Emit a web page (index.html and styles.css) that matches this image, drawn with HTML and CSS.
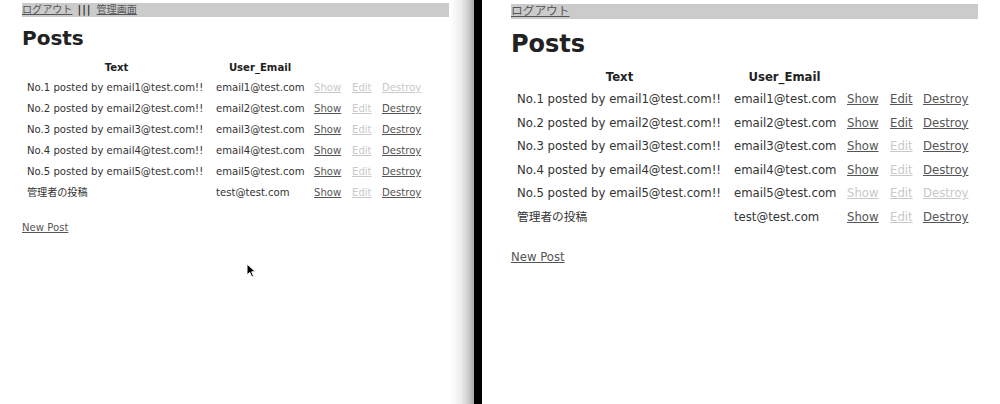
FILE: index.html
```html
<!DOCTYPE html>
<html lang="ja">
<head>
<meta charset="utf-8">
<title>Posts</title>
<link rel="stylesheet" href="styles.css">
</head>
<body>
<div class="screen">
  <section class="panel panel-left">
    <div class="nav"><a href="#">ログアウト</a><span class="sep">|||</span><a href="#">管理画面</a></div>
    <h1>Posts</h1>
    <table class="posts">
      <colgroup><col class="c1"><col class="c2"><col class="c3"><col class="c4"><col class="c5"></colgroup>
      <thead><tr><th>Text</th><th>User_Email</th><th></th><th></th><th></th></tr></thead>
      <tbody>
        <tr><td>No.1 posted by email1@test.com!!</td><td>email1@test.com</td><td><a class="off" href="#">Show</a></td><td><a class="off" href="#">Edit</a></td><td><a class="off" href="#">Destroy</a></td></tr>
        <tr><td>No.2 posted by email2@test.com!!</td><td>email2@test.com</td><td><a href="#">Show</a></td><td><a class="off" href="#">Edit</a></td><td><a href="#">Destroy</a></td></tr>
        <tr><td>No.3 posted by email3@test.com!!</td><td>email3@test.com</td><td><a href="#">Show</a></td><td><a class="off" href="#">Edit</a></td><td><a href="#">Destroy</a></td></tr>
        <tr><td>No.4 posted by email4@test.com!!</td><td>email4@test.com</td><td><a href="#">Show</a></td><td><a class="off" href="#">Edit</a></td><td><a href="#">Destroy</a></td></tr>
        <tr><td>No.5 posted by email5@test.com!!</td><td>email5@test.com</td><td><a href="#">Show</a></td><td><a class="off" href="#">Edit</a></td><td><a href="#">Destroy</a></td></tr>
        <tr><td>管理者の投稿</td><td>test@test.com</td><td><a href="#">Show</a></td><td><a class="off" href="#">Edit</a></td><td><a href="#">Destroy</a></td></tr>
      </tbody>
    </table>
    <p class="new"><a href="#">New Post</a></p>
    <svg class="cursor" width="12" height="16" viewBox="0 0 12 16"><path d="M1 1 L1 12 L3.8 9.4 L5.8 14 L7.6 13.2 L5.7 8.8 L9.5 8.8 Z" fill="#000" stroke="#fff" stroke-width="1"/></svg>
  </section>
  <div class="divider"></div>
  <section class="panel panel-right">
    <div class="nav"><a href="#">ログアウト</a></div>
    <h1>Posts</h1>
    <table class="posts">
      <colgroup><col class="c1"><col class="c2"><col class="c3"><col class="c4"><col class="c5"></colgroup>
      <thead><tr><th>Text</th><th>User_Email</th><th></th><th></th><th></th></tr></thead>
      <tbody>
        <tr><td>No.1 posted by email1@test.com!!</td><td>email1@test.com</td><td><a href="#">Show</a></td><td><a href="#">Edit</a></td><td><a href="#">Destroy</a></td></tr>
        <tr><td>No.2 posted by email2@test.com!!</td><td>email2@test.com</td><td><a href="#">Show</a></td><td><a href="#">Edit</a></td><td><a href="#">Destroy</a></td></tr>
        <tr><td>No.3 posted by email3@test.com!!</td><td>email3@test.com</td><td><a href="#">Show</a></td><td><a class="off" href="#">Edit</a></td><td><a href="#">Destroy</a></td></tr>
        <tr><td>No.4 posted by email4@test.com!!</td><td>email4@test.com</td><td><a href="#">Show</a></td><td><a class="off" href="#">Edit</a></td><td><a href="#">Destroy</a></td></tr>
        <tr><td>No.5 posted by email5@test.com!!</td><td>email5@test.com</td><td><a class="off" href="#">Show</a></td><td><a class="off" href="#">Edit</a></td><td><a class="off" href="#">Destroy</a></td></tr>
        <tr><td>管理者の投稿</td><td>test@test.com</td><td><a href="#">Show</a></td><td><a class="off" href="#">Edit</a></td><td><a href="#">Destroy</a></td></tr>
      </tbody>
    </table>
    <p class="new"><a href="#">New Post</a></p>
  </section>
</div>
</body>
</html>
```
FILE: styles.css
```css
html, body {
  margin: 0;
  padding: 0;
  background: #fff;
}
body {
  font-family: "DejaVu Sans", Verdana, "Noto Sans CJK JP", sans-serif;
  color: #333;
}
.screen {
  display: flex;
  width: 1000px;
  height: 404px;
  overflow: hidden;
}
.panel {
  box-sizing: border-box;
  height: 404px;
}
.panel a {
  color: #555;
  text-decoration: underline;
}
.panel a.off {
  color: #c9c9c9;
}
.nav {
  background: #cbcbcb;
}
.panel h1 {
  margin: 0;
  color: #222;
  font-weight: bold;
}
.posts {
  border-collapse: collapse;
  table-layout: fixed;
}
.posts th {
  font-weight: bold;
  text-align: center;
  color: #222;
}
.posts td {
  text-align: left;
  white-space: nowrap;
}
.new {
  margin: 0;
}

/* Left window (smaller) */
.panel-left {
  position: relative;
  width: 474px;
  padding: 3px 25px 0 22px;
  font-size: 10.1px;
  background: linear-gradient(to right, #fff 0, #fff 450px, #f0f0f0 460px, #cfcfcf 468px, #a8a8a8 474px);
}
.panel-left .nav {
  height: 14px;
  line-height: 14px;
}
.panel-left .sep {
  display: inline-block;
  margin: 0 5px 0 5px;
  letter-spacing: 1px;
  color: #333;
  font-weight: bold;
}
.panel-left h1 {
  font-size: 20px;
  line-height: 24px;
  margin-top: 9px;
}
.panel-left .posts {
  margin-top: 8px;
  width: 405px;
}
.panel-left .posts col.c1 { width: 189px; }
.panel-left .posts col.c2 { width: 98px; }
.panel-left .posts col.c3 { width: 38px; }
.panel-left .posts col.c4 { width: 30px; }
.panel-left .posts col.c5 { width: 50px; }
.panel-left .posts th,
.panel-left .posts td {
  padding: 0 5px;
}
.panel-left .posts th { height: 19px; line-height: 19px; }
.panel-left .posts td { height: 21px; line-height: 21px; }
.panel-left .new {
  margin-top: 18px;
  line-height: 13px;
}
.cursor {
  position: absolute;
  left: 246px;
  top: 263px;
}

.divider {
  width: 8px;
  flex: none;
  background: #000;
}

/* Right window (larger) */
.panel-right {
  flex: 1;
  padding: 4px 22px 0 29px;
  font-size: 11.7px;
}
.panel-right .nav {
  height: 15px;
  line-height: 15px;
}
.panel-right h1 {
  font-size: 24px;
  line-height: 28px;
  margin-top: 11px;
}
.panel-right .posts {
  margin-top: 8px;
  width: 464px;
}
.panel-right .posts col.c1 { width: 217px; }
.panel-right .posts col.c2 { width: 113px; }
.panel-right .posts col.c3 { width: 43px; }
.panel-right .posts col.c4 { width: 33px; }
.panel-right .posts col.c5 { width: 58px; }
.panel-right .posts th,
.panel-right .posts td {
  padding: 0 6px;
}
.panel-right .posts th { height: 22px; line-height: 22px; }
.panel-right .posts td { height: 23.6px; line-height: 23.6px; }
.panel-right .new {
  margin-top: 20px;
  line-height: 15px;
}
```
